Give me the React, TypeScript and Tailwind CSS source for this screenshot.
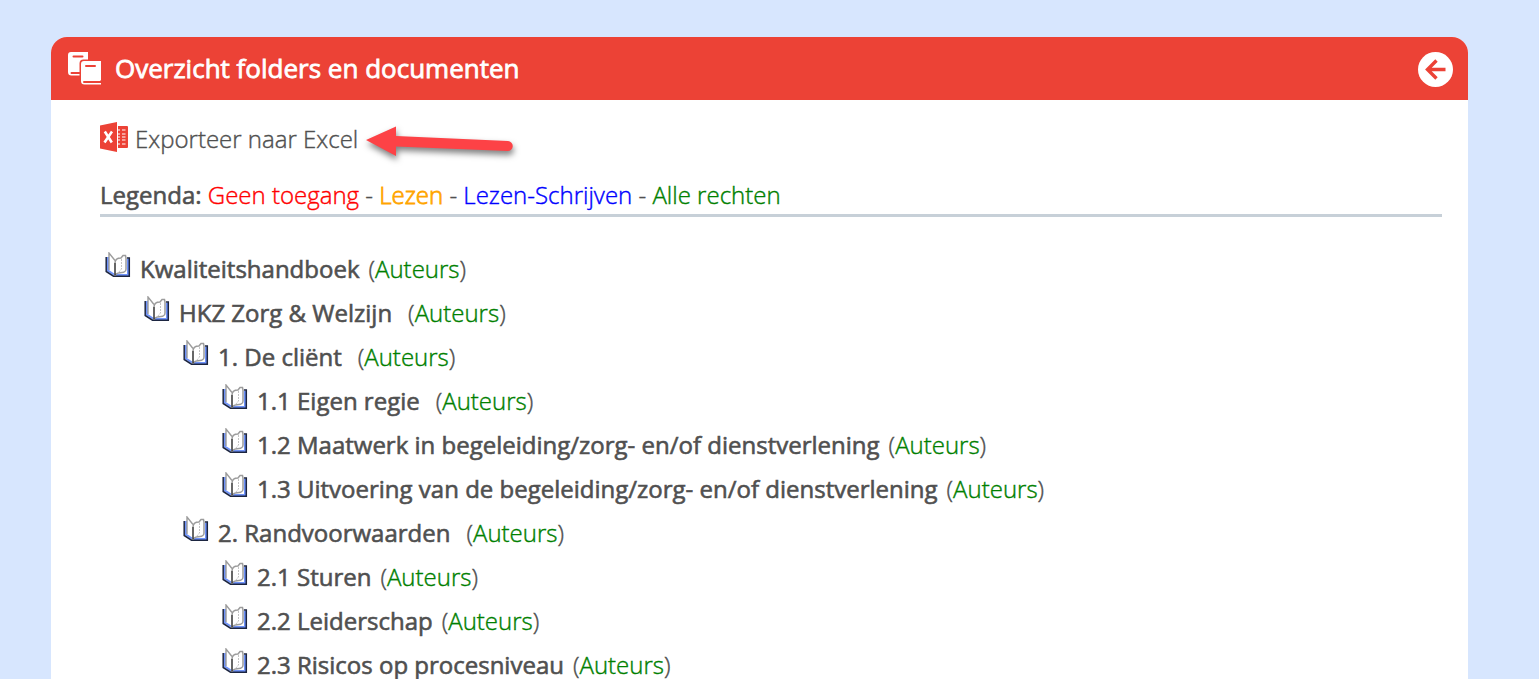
interface Folder {
    title: string;
    wideGap?: boolean;
    children?: Folder[];
}

const folders: Folder[] = [
    {
        title: "Kwaliteitshandboek",
        children: [
            {
                title: "HKZ Zorg & Welzijn",
                wideGap: true,
                children: [
                    {
                        title: "1. De cliënt",
                        wideGap: true,
                        children: [
                            { title: "1.1 Eigen regie", wideGap: true },
                            { title: "1.2 Maatwerk in begeleiding/zorg- en/of dienstverlening" },
                            { title: "1.3 Uitvoering van de begeleiding/zorg- en/of dienstverlening" },
                        ],
                    },
                    {
                        title: "2. Randvoorwaarden",
                        wideGap: true,
                        children: [
                            { title: "2.1 Sturen" },
                            { title: "2.2 Leiderschap" },
                            { title: "2.3 Risicos op procesniveau" },
                        ],
                    },
                ],
            },
        ],
    },
];

function BooksIcon() {
    return (
        <svg width="34" height="34" viewBox="0 0 34 34" aria-hidden="true">
            <path
                fill="#fff"
                d="M3 0h17v7.500h-4.500a4 4 0 0 0-4 4v12H3.500A3.500 3.500 0 0 1 0 20V3a3 3 0 0 1 3-3z"
            />
            <path d="M5.500 4.500h9M3.500 21h8" stroke="#ec4236" strokeWidth="2" strokeLinecap="round" />
            <path
                fill="#fff"
                d="M16 9h17v19.500h-1v2.500h1V32.500H16.500A3.500 3.500 0 0 1 13 29V12a3 3 0 0 1 3-3z"
            />
            <path d="M18 14h9M16 30h16.500" stroke="#ec4236" strokeWidth="2" strokeLinecap="round" />
        </svg>
    );
}

function ExcelIcon() {
    return (
        <svg width="28" height="30" viewBox="0 0 28 30" className="mb-1" aria-hidden="true">
            <path fill="#ec4236" d="M0 3.500 17 0v30L0 26.500z" />
            <path fill="#ec4236" d="M18 4h9a1 1 0 0 1 1 1v20a1 1 0 0 1-1 1h-9z" />
            <path
                d="M18 8h2m2 0h3.500M18 12h2m2 0h3.500M18 15h2m2 0h3.500M18 18h2m2 0h3.500M18 22h2m2 0h3.500"
                stroke="#fff"
                strokeWidth="1.200"
            />
            <path d="m4.800 9.500 7 11M12 9.500l-7.500 11" stroke="#fff" strokeWidth="2.600" />
        </svg>
    );
}

function PointerArrow() {
    return (
        <svg width="156" height="44" viewBox="0 -5 156 44" className="overflow-visible" aria-hidden="true">
            <path
                fill="#fd4246"
                d="M0 18 30 4.500V14L142 19a5 5 0 0 1-.5 10L30 24.500V34z"
                className="drop-shadow-[1px_4px_3px_rgba(0,0,0,0.5)]"
            />
        </svg>
    );
}

function BookIcon() {
    return (
        <svg width="26" height="26" viewBox="0 0 26 26" className="mb-2 shrink-0" aria-hidden="true">
            <path fill="#fff" d="M4 1 10 7v15l-7-4z" />
            <path fill="#fff" d="M10 10c0-4 3-5 6-5l2-2h3v14l-4 4-7 2z" />
            <path d="M3 5v13.500l6 4M11 23h12V7" fill="none" stroke="#6f93fa" strokeWidth="2" />
            <path d="M1.200 5v14.500L8.500 24.200H24.300V6H22" fill="none" stroke="#1c2540" strokeWidth="1.500" />
            <path d="M4 18V1l6 7.500" fill="none" stroke="#9c9c9c" strokeWidth="1.400" />
            <path
                d="M10 11c0-4 2-5 6-5l2-2.500h2.500L21 6v11c0 2-2 3.500-4 3.500-3 0-5 .5-7 2.500"
                fill="none"
                stroke="#9c9c9c"
                strokeWidth="1.500"
            />
            <path d="M16.500 7v10l-3 3.500" fill="none" stroke="#c4c4c4" strokeDasharray="2 1" />
            <path d="M10 11v12.500" stroke="#333" strokeWidth="1.500" />
        </svg>
    );
}

function FolderList({ items }: { items: Folder[] }) {
    return (
        <ul>
            {items.map((folder) => (
                <li key={folder.title}>
                    <div className="flex h-11 items-center whitespace-nowrap">
                        <BookIcon />
                        <span className="ml-[9px] font-normal [-webkit-text-stroke:0.6px]">{folder.title}</span>
                        <span className={folder.wideGap ? "ml-4" : "ml-[9px]"}>
                            (<a href="#auteurs" className="text-[#008000]">Auteurs</a>)
                        </span>
                    </div>
                    {folder.children && (
                        <div className="pl-[39px]">
                            <FolderList items={folder.children} />
                        </div>
                    )}
                </li>
            ))}
        </ul>
    );
}

export default function App() {
    return (
        <div className="flex min-h-screen flex-col bg-[#d7e6fe] pt-[37px] pr-[71px] pl-[51px] font-['Open_Sans',sans-serif] text-2xl font-light text-[#505050] [-webkit-text-stroke:0.4px]">
            <div className="grow rounded-t-2xl bg-white">
                <header className="flex h-[63px] items-center rounded-t-2xl bg-[#ec4236] pr-[15px] pl-[17px] text-white">
                    <BooksIcon />
                    <h1 className="ml-[13px] pb-0.5 text-[26px] leading-8 font-normal [-webkit-text-stroke:0.8px]">
                        Overzicht folders en documenten
                    </h1>
                    <button type="button" aria-label="Terug" className="ml-auto pt-px">
                        <svg width="35" height="35" viewBox="0 0 35 35" aria-hidden="true">
                            <circle cx="17.500" cy="17.500" r="17.500" fill="#fff" />
                            <path
                                d="M27.500 17.500H10M18.500 8.500l-9 9 9 9"
                                fill="none"
                                stroke="#ec4236"
                                strokeWidth="3.400"
                            />
                        </svg>
                    </button>
                </header>

                <main className="pt-[15px] pr-[26px] pl-[49px]">
                    <div className="flex h-12 items-center">
                        <a href="#excel" className="flex items-center gap-[7px]">
                            <ExcelIcon />
                            <span>Exporteer naar Excel</span>
                        </a>
                        <span className="ml-2">
                            <PointerArrow />
                        </span>
                    </div>

                    <p className="mt-4 border-b-3 border-[#c7d0d8] pb-[3px]">
                        <span className="font-normal [-webkit-text-stroke:0.6px]">Legenda:</span>{" "}
                        <span className="text-[#ff0000]">Geen toegang</span> -{" "}
                        <span className="text-[#ffa500] [-webkit-text-stroke:0.8px]">Lezen</span> -{" "}
                        <span className="text-[#0000ff]">Lezen-Schrijven</span> -{" "}
                        <span className="text-[#008000]">Alle rechten</span>
                    </p>

                    <nav className="mt-[30px] pl-[5px]">
                        <FolderList items={folders} />
                    </nav>
                </main>
            </div>
        </div>
    );
}
